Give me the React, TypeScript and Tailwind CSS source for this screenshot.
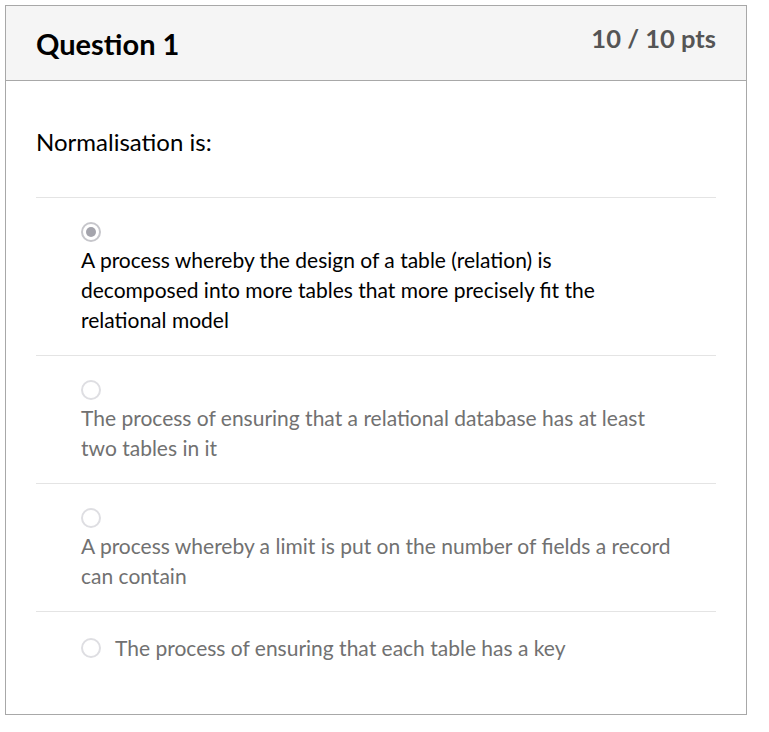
import React from 'react';

type Answer = { lines: string[]; selected?: boolean; inline?: boolean };

const answers: Answer[] = [
  {
    lines: [
      'A process whereby the design of a table (relation) is',
      'decomposed into more tables that more precisely fit the',
      'relational model',
    ],
    selected: true,
  },
  { lines: ['The process of ensuring that a relational database has at least', 'two tables in it'] },
  { lines: ['A process whereby a limit is put on the number of fields a record', 'can contain'] },
  { lines: ['The process of ensuring that each table has a key'], inline: true },
];

const Radio = ({ selected }: { selected?: boolean }) => (
  <span
    className={`flex h-[20px] w-[20px] shrink-0 items-center justify-center rounded-full border-2 bg-white ${
      selected ? 'border-[#c6c6cb]' : 'border-[#dedee2]'
    }`}
  >
    {selected && <span className="h-[10px] w-[10px] rounded-full bg-[#a4a4ac]" />}
  </span>
);

export default function App() {
  return (
    <div className="p-[5px]" style={{ fontFamily: 'Lato, "Noto Sans", sans-serif' }}>
      <div className="h-[710px] w-[742px] border border-[#a8a8a8] bg-white">
        {/* Header */}
        <div className="flex h-[75px] items-start justify-between border-b border-[#a8a8a8] bg-[#f5f5f5] px-[30px]">
          <h2 className="pt-[21px] text-[29px] font-bold leading-[34px] text-black">Question 1</h2>
          <div className="pt-[17px] text-[25.5px] font-bold leading-[30px] text-[#555]">10 / 10 pts</div>
        </div>

        {/* Body */}
        <div className="px-[30px]">
          <p className="pt-[46px] pb-[40px] text-[24px] leading-[30px] text-black">Normalisation is:</p>
          <ul className="border-t border-[#e4e4e4]">
            {answers.map((a, i) => (
              <li
                key={i}
                className={`border-[#e4e4e4] pl-[45px] ${i < answers.length - 1 ? 'border-b' : ''} ${
                  a.inline ? 'flex items-center gap-[14px] pt-[21px]' : 'pt-[24px] pb-[20px]'
                }`}
              >
                <Radio selected={a.selected} />
                <p
                  className={`${a.inline ? '' : 'mt-[3px]'} whitespace-nowrap text-[21px] leading-[30px] ${
                    a.selected ? 'text-black' : 'text-[#717171]'
                  }`}
                >
                  {a.lines.map((l, j) => (
                    <span key={j} className="block">
                      {l}
                    </span>
                  ))}
                </p>
              </li>
            ))}
          </ul>
        </div>
      </div>
    </div>
  );
}
